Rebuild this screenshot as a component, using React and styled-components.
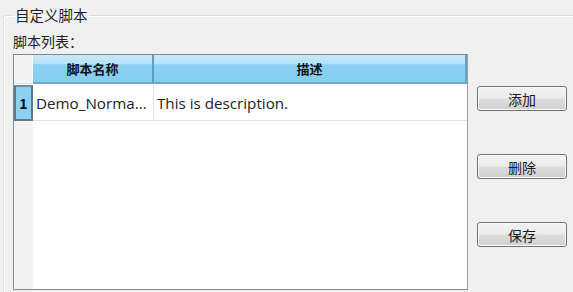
import styled, { createGlobalStyle } from "styled-components";

const GlobalStyle = createGlobalStyle`
  html, body {
    margin: 0;
    padding: 0;
    background: #f0f0f0;
    overflow: hidden;
  }
  body {
    font-family: "Noto Sans CJK SC", "Noto Sans", sans-serif;
    font-size: 14px;
    color: #1e1e1e;
  }
`;

const Page = styled.div`
  width: 573px;
  height: 292px;
  overflow: hidden;
  padding: 6px 0 0 3px;
  box-sizing: border-box;
`;

const Group = styled.fieldset`
  margin: 0;
  padding: 0 0 0 9px;
  width: 600px;
  height: 320px;
  border: 1px solid #d5dfe5;
  border-radius: 3px;
  box-shadow: inset 1px 1px 0 #ffffff;
  box-sizing: border-box;
`;

const Legend = styled.legend`
  margin-left: 0;
  padding: 0 2px;
  font-size: 14.5px;
  line-height: 18px;
`;

const Label = styled.div`
  margin-top: 8px;
  font-size: 14px;
  line-height: 18px;
`;

const Body = styled.div`
  display: flex;
  align-items: flex-start;
  margin-top: 4px;
`;

const Table = styled.div`
  width: 455px;
  height: 236px;
  border: 1px solid #828790;
  border-right-color: #9a9ea6;
  background: #ffffff;
  box-sizing: border-box;
  display: grid;
  grid-template-columns: 19px 121px 1fr;
  grid-template-rows: 29px 37px 1fr;
`;

const Corner = styled.div`
  background: #f4f4f4;
  border-right: 1px solid #ffffff;
  border-bottom: 1px solid #e3e3e3;
`;

const HeadCell = styled.div`
  display: flex;
  align-items: center;
  justify-content: center;
  font-weight: bold;
  font-size: 13px;
  color: #111;
  background: linear-gradient(#c6e9fa 0%, #b6e2f8 33%, #8dd0f1 36%, #85cdf0 100%);
  border-right: 2px solid ${(p) => (p.$last ? "#6aa2bf" : "#5e9ec3")};
  border-bottom: 2px solid #6fa8c6;
`;

const RowNum = styled.div`
  display: flex;
  align-items: center;
  justify-content: center;
  font-weight: bold;
  font-size: 14px;
  color: #111;
  background: #8dd0f1;
  border: 2px solid #5c7a8c;
  border-top-color: #6e8ea0;
  margin-top: 1px;
`;

const Cell = styled.div`
  display: flex;
  align-items: center;
  padding-left: 3px;
  font-family: "Open Sans", "Noto Sans CJK SC", sans-serif;
  font-size: 15.2px;
  color: #222;
  border-right: ${(p) => (p.$last ? "none" : "1px solid #e2e2e2")};
  border-bottom: 1px solid #e2e2e2;
  margin-top: 1px;
  white-space: nowrap;
  overflow: hidden;
`;

const Gutter = styled.div`
  background: #f4f4f4;
`;

const Empty = styled.div`
  grid-column: span 2;
`;

const Buttons = styled.div`
  display: flex;
  flex-direction: column;
  gap: 43px;
  margin-left: 9px;
  padding-top: 32px;
`;

const Button = styled.button`
  width: 90px;
  height: 25px;
  padding: 0;
  font-family: "Noto Sans CJK SC", sans-serif;
  font-size: 14px;
  color: #1a1a1a;
  border: 1px solid #707070;
  border-radius: 3px;
  background: linear-gradient(#f2f2f2 0%, #ebebeb 48%, #dddddd 52%, #cfcfcf 100%);
  box-shadow: inset 0 0 0 1px #fcfcfc;
`;

export default function App() {
  return (
    <Page>
      <GlobalStyle />
      <Group>
        <Legend>自定义脚本</Legend>
        <Label>脚本列表：</Label>
        <Body>
          <Table>
            <Corner />
            <HeadCell>脚本名称</HeadCell>
            <HeadCell $last>描述</HeadCell>
            <RowNum>1</RowNum>
            <Cell>Demo_Norma...</Cell>
            <Cell $last>This is description.</Cell>
            <Gutter />
            <Empty />
          </Table>
          <Buttons>
            <Button>添加</Button>
            <Button>删除</Button>
            <Button>保存</Button>
          </Buttons>
        </Body>
      </Group>
    </Page>
  );
}
